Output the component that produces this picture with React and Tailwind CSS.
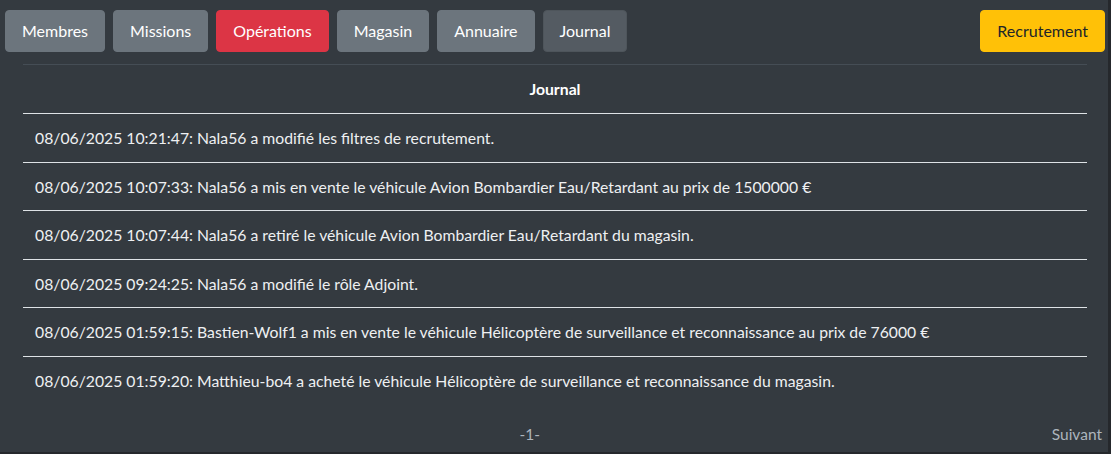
const tabs = [
  { label: "Membres", cls: "bg-[#6c757d] border-[#6c757d] text-white" },
  { label: "Missions", cls: "bg-[#6c757d] border-[#6c757d] text-white" },
  { label: "Opérations", cls: "bg-[#dc3545] border-[#dc3545] text-white" },
  { label: "Magasin", cls: "bg-[#6c757d] border-[#6c757d] text-white" },
  { label: "Annuaire", cls: "bg-[#6c757d] border-[#6c757d] text-white" },
  { label: "Journal", cls: "bg-[#545b62] border-[#4e555b] text-white" },
];

const logs = [
  "08/06/2025 10:21:47: Nala56 a modifié les filtres de recrutement.",
  "08/06/2025 10:07:33: Nala56 a mis en vente le véhicule Avion Bombardier Eau/Retardant au prix de 1500000 €",
  "08/06/2025 10:07:44: Nala56 a retiré le véhicule Avion Bombardier Eau/Retardant du magasin.",
  "08/06/2025 09:24:25: Nala56 a modifié le rôle Adjoint.",
  "08/06/2025 01:59:15: Bastien-Wolf1 a mis en vente le véhicule Hélicoptère de surveillance et reconnaissance au prix de 76000 €",
  "08/06/2025 01:59:20: Matthieu-bo4 a acheté le véhicule Hélicoptère de surveillance et reconnaissance du magasin.",
];

export default function App() {
  return (
    <div className="w-[1111px] h-[454px] overflow-hidden bg-[#343a40] border-r-[3px] border-b-2 border-[#25282c] font-['Segoe_UI',Lato,sans-serif]">
      {/* Tabs */}
      <nav className="flex gap-2 pl-[5px] pr-[3px] pt-[10px]">
        {tabs.map((t) => (
          <button
            key={t.label}
            className={`px-4 py-2 border rounded text-[16px] leading-6 ${t.cls}`}
          >
            {t.label}
          </button>
        ))}
        <button className="ml-auto px-4 py-2 border rounded text-[16px] leading-6 bg-[#ffc107] border-[#ffc107] text-[#212529]">
          Recrutement
        </button>
      </nav>

      {/* Journal table */}
      <table className="ml-[23px] mt-[12px] w-[1064px] border-collapse text-[15.75px]">
        <thead>
          <tr className="border-t border-[#454d55] border-b border-b-[#dee2e6]">
            <th className="py-3 px-3 leading-6 text-white font-bold text-center">Journal</th>
          </tr>
        </thead>
        <tbody>
          {logs.map((l, i) => (
            <tr key={i} className={i < logs.length - 1 ? "border-b border-[#dee2e6]" : ""}>
              <td className="py-3 px-3 leading-[23.6px] text-[#eef0f2]">{l}</td>
            </tr>
          ))}
        </tbody>
      </table>

      {/* Pagination */}
      <div className="flex justify-between items-center pl-2 pr-[6px] mt-[17px] text-[15.5px] leading-6 text-[#adb5bd]">
        <span />
        <span>-1-</span>
        <span>Suivant</span>
      </div>
    </div>
  );
}
